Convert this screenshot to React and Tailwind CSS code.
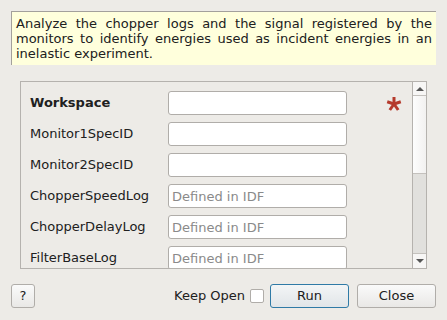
export default function App() {
  const font = { fontFamily: '"DejaVu Sans", sans-serif' };

  const rows = [
    { label: 'Workspace', bold: true, star: true },
    { label: 'Monitor1SpecID' },
    { label: 'Monitor2SpecID' },
    { label: 'ChopperSpeedLog', placeholder: 'Defined in IDF' },
    { label: 'ChopperDelayLog', placeholder: 'Defined in IDF' },
    { label: 'FilterBaseLog', placeholder: 'Defined in IDF' },
  ];

  return (
    <div
      className="w-[447px] h-[320px] bg-[#edebe7] text-[13px] text-[#202020] flex flex-col overflow-hidden"
      style={font}
    >
      <div className="mt-[11px] ml-[11px] w-[425px] h-[54px] bg-[#ffffdc] border-t border-l border-[#a3a09c] px-[4px] pt-[4px] leading-[15px] text-justify">
        Analyze the chopper logs and the signal registered by the monitors to identify energies used as incident energies in an inelastic experiment.
      </div>

      <div className="mt-[16px] ml-[20px] w-[407px] h-[188px] border border-[#b5b2ae] border-r-0 flex">
        <div className="flex-1 overflow-hidden pt-[9px] pl-[9px] flex flex-col gap-[7px]">
          {rows.map((r) => (
            <div key={r.label} className="flex items-center h-[24px] shrink-0">
              <div className={`w-[138px] ${r.bold ? 'font-bold' : ''}`}>{r.label}</div>
              <input
                className="w-[179px] h-[24px] bg-white border border-[#b0ada9] rounded-[3px] px-[3px] text-[13px] outline-none placeholder:text-[#8a8a8a]"
                style={font}
                placeholder={r.placeholder || ''}
                readOnly
              />
              {r.star && (
                <svg className="ml-[39px] mt-[1px]" width="16" height="16" viewBox="0 0 16 16">
                  <g stroke="#b53a2c" strokeWidth="3" strokeLinecap="butt">
                    <line x1="8" y1="1" x2="8" y2="8.5" />
                    <line x1="8" y1="8" x2="1.2" y2="5.8" />
                    <line x1="8" y1="8" x2="14.8" y2="5.8" />
                    <line x1="8" y1="8" x2="3.8" y2="14" />
                    <line x1="8" y1="8" x2="12.2" y2="14" />
                  </g>
                </svg>
              )}
            </div>
          ))}
        </div>
        <div className="w-[15px] flex flex-col border-l border-r border-[#b5b2ae]">
          <div className="h-[14px] bg-[#f7f6f5] border-b border-[#c4c1bd] flex items-center justify-center">
            <div className="w-0 h-0 border-l-[4px] border-r-[4px] border-b-[4px] border-l-transparent border-r-transparent border-b-[#555]" />
          </div>
          <div className="h-[78px] bg-gradient-to-r from-[#fdfdfd] to-[#f2f1f0] border-b border-[#c4c1bd]" />
          <div className="flex-1 bg-[#e1e0dd]" />
          <div className="h-[15px] bg-[#f7f6f5] border-t border-[#c4c1bd] flex items-center justify-center">
            <div className="w-0 h-0 border-l-[4px] border-r-[4px] border-t-[4px] border-l-transparent border-r-transparent border-t-[#555]" />
          </div>
        </div>
      </div>

      <div className="mt-[15px] mx-[11px] h-[24px] flex items-center">
        <button className="w-[24px] h-[24px] border border-[#b0ada9] rounded-[3px] bg-gradient-to-b from-[#fafafa] to-[#e9e8e6] text-[13px]" style={font}>
          ?
        </button>
        <div className="flex-1" />
        <span>Keep Open</span>
        <div className="ml-[5px] w-[14px] h-[14px] bg-white border border-[#b0ada9] rounded-[2px]" />
        <button className="ml-[6px] w-[79px] h-[24px] border border-[#2f7aa6] rounded-[3px] bg-gradient-to-b from-[#f3f5f6] to-[#e1e5e8] text-[13px]" style={font}>
          Run
        </button>
        <button className="ml-[8px] w-[79px] h-[24px] border border-[#b0ada9] rounded-[3px] bg-gradient-to-b from-[#fafafa] to-[#e9e8e6] text-[13px]" style={font}>
          Close
        </button>
      </div>
    </div>
  );
}
